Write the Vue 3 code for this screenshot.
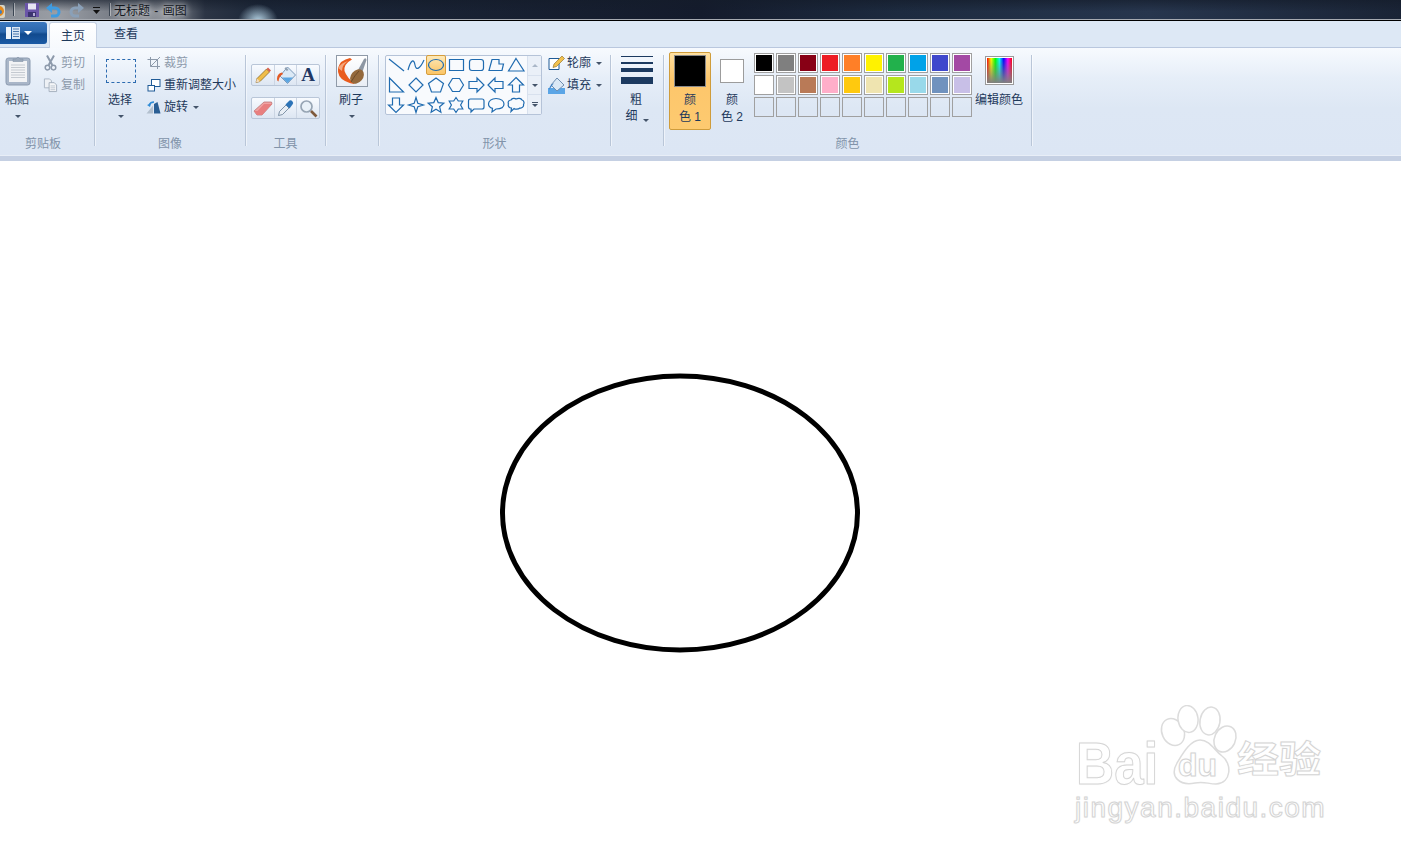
<script setup>
const row1 = ['#000000', '#7f7f7f', '#880015', '#ed1c24', '#ff7f27', '#fff200', '#22b14c', '#00a2e8', '#3f48cc', '#a349a4']
const row2 = ['#ffffff', '#c3c3c3', '#b97a57', '#ffaec9', '#ffc90e', '#efe4b0', '#b5e61d', '#99d9ea', '#7092be', '#c8bfe7']
const row3 = Array(10).fill('transparent')

// 形状ギャラリー: 20x20 のセルに描く
const shapes = [
  'M3 4 L18 16',
  'M2 15 C5 4 8 4 9 10 C10 16 14 14 18 5',
  'ELLIPSE',
  'M3.5 4.5 H17.5 V15.5 H3.5 Z',
  'M6 4.5 H15 Q17.5 4.5 17.5 7 V13 Q17.5 15.5 15 15.5 H6 Q3.5 15.5 3.5 13 V7 Q3.5 4.5 6 4.5 Z',
  'M3 15.5 L6 4.5 H13 L13 9 L17.5 9 L16 15.5 Z',
  'M10 3.5 L18 16 H2.5 Z',
  'M3.5 3 V17 H17.5 Z',
  'M10 3 L17 10 L10 17 L3 10 Z',
  'M10 3 L17.5 8.5 L14.5 17 H5.5 L2.5 8.5 Z',
  'M6.5 3.5 H13.5 L17.5 10 L13.5 16.5 H6.5 L2.5 10 Z',
  'M3 6.5 H11 V3 L18 10 L11 17 V13.5 H3 Z',
  'M17 6.5 H9 V3 L2 10 L9 17 V13.5 H17 Z',
  'M10 2.5 L17.5 10 H13.5 V17 H6.5 V10 H2.5 Z',
  'M6.5 3 H13.5 V10 H17.5 L10 17.5 L2.5 10 H6.5 Z',
  'M10 2.5 L11.8 8.2 L17.5 10 L11.8 11.8 L10 17.5 L8.2 11.8 L2.5 10 L8.2 8.2 Z',
  'M10 2.5 L12.2 7.6 L17.8 8.1 L13.6 11.7 L14.9 17.2 L10 14.3 L5.1 17.2 L6.4 11.7 L2.2 8.1 L7.8 7.6 Z',
  'M10 2.5 L12.3 6 L16.8 6 L14.6 10 L16.8 14 L12.3 14 L10 17.5 L7.7 14 L3.2 14 L5.4 10 L3.2 6 L7.7 6 Z',
  'M4.5 4 H16 Q18 4 18 6 V12 Q18 14 16 14 H8 L5 17 V14 H4.5 Q2.5 14 2.5 12 V6 Q2.5 4 4.5 4 Z',
  'M10 3.5 C15 3.5 18 6 18 9 C18 12 15 14 10 14 L6 17 L6.5 13.4 C4 12.6 2.5 11 2.5 9 C2.5 6 5.5 3.5 10 3.5 Z',
  'M5 5 C6 3 9 3 10 4 C12 3 15 3 16 5 C18 5.5 18.5 8 17.5 9.5 C18 11.5 16 13.5 14 13 C12 14.5 9 14.5 8 13.5 L5 16.5 L5.5 13 C3 13 1.5 10.5 2.5 9 C1.5 7 3 5 5 5 Z',
]
</script>

<template>
  <div class="paint">
    <div class="titlebar">
      <div class="qat">
        <svg class="app-ico" width="8" height="18" viewBox="0 0 8 18"><rect x="-8" y="4" width="13" height="13" rx="2" fill="#d8d4c4"/><circle cx="-1" cy="10" r="5" fill="#e58a1f"/><circle cx="0" cy="11" r="2" fill="#3c7fc4"/></svg>
        <span class="qat-sep first"></span>
        <svg width="16" height="16" viewBox="0 0 16 16"><path d="M1 1 H15 V15 H1 Z" fill="#6a55a8"/><rect x="4" y="1.5" width="8" height="6" fill="#e6e4f2"/><rect x="4" y="10" width="8" height="5" fill="#3c3470"/><rect x="9" y="11" width="2" height="3" fill="#b4aed6"/></svg>
        <svg class="undo" width="17" height="16" viewBox="0 0 17 16"><path d="M5 6 H10 A4 4 0 0 1 10 14 H6" fill="none" stroke="#3f9be0" stroke-width="3"/><path d="M1 6 L7 1 V11 Z" fill="#3f9be0"/></svg>
        <svg class="redo" width="17" height="16" viewBox="0 0 17 16"><path d="M12 6 H7 A4 4 0 0 0 7 14 H11" fill="none" stroke="#8aa0b8" stroke-width="3"/><path d="M16 6 L10 1 V11 Z" fill="#8aa0b8"/></svg>
        <svg class="drop" width="9" height="9" viewBox="0 0 9 9"><rect x="1" y="1" width="7" height="1" fill="#111"/><path d="M1 4 H8 L4.5 8 Z" fill="#111"/></svg>
        <span class="qat-sep"></span>
      </div>
      <span class="title">无标题 - 画图</span>
    </div>

    <div class="tabs">
      <button class="app-btn">
        <svg width="15" height="12" viewBox="0 0 15 12"><rect width="5" height="12" fill="#eef4fb"/><rect x="6" width="8" height="12" fill="#dbe7f5"/><path d="M7 2 H13 M7 4.5 H13 M7 7 H13 M7 9.5 H13" stroke="#4d78ad" stroke-width="1"/></svg>
        <i class="tri white"></i>
      </button>
      <div class="tab active">主页</div>
      <div class="tab">查看</div>
    </div>

    <div class="ribbon">
      <section class="group g-clip">
        <div class="body">
          <div class="big paste">
            <svg class="big-ico" width="26" height="30" viewBox="0 0 26 30"><rect x="1" y="2" width="24" height="27" rx="2.5" fill="#a9b6c8" stroke="#8c9bb0"/><rect x="4" y="5" width="18" height="21" fill="#f2f3f5"/><path d="M6 9 H20 M6 11.5 H20 M6 14 H20 M6 16.5 H20 M6 19 H20 M6 21.5 H20" stroke="#c4c9d0"/><path d="M8 5.5 V3 H11 Q13 -0.5 15 3 H18 V5.5 Z" fill="#9aa8ba" stroke="#8494a8" stroke-width=".6"/></svg>
            <span class="paste-text">粘贴</span>
            <i class="tri"></i>
          </div>
          <div class="small-col clip-col">
            <div class="small off">
              <svg width="14" height="16" viewBox="0 0 14 16"><path d="M3.5 0.5 L8.8 10 M10.5 0.5 L5.2 10" stroke="#8d9aab" stroke-width="2"/><circle cx="4" cy="12.6" r="2.3" fill="none" stroke="#8d9aab" stroke-width="1.5"/><circle cx="10" cy="12.6" r="2.3" fill="none" stroke="#8d9aab" stroke-width="1.5"/></svg>
              <span>剪切</span>
            </div>
            <div class="small off">
              <svg width="16" height="16" viewBox="0 0 16 16"><path d="M1.5 1.5 H7 L9 3.5 V11 H1.5 Z" fill="#eef1f5" stroke="#aab5c3"/><path d="M6.5 5.5 H12 L14.5 8 V15 H6.5 Z" fill="#f5f6f8" stroke="#a2aebd"/><path d="M8 9 H13 M8 11 H13 M8 13 H13" stroke="#bcc5d0"/></svg>
              <span>复制</span>
            </div>
          </div>
        </div>
        <div class="group-label clip-label">剪贴板</div>
      </section>
      <span class="sep"></span>

      <section class="group g-image">
        <div class="body">
          <div class="big select">
            <span class="marquee"></span>
            <span class="select-text">选择</span>
            <i class="tri"></i>
          </div>
          <div class="small-col image-col">
            <div class="small off">
              <svg width="14" height="14" viewBox="0 0 14 14"><path d="M3.5 1 V10.5 H13 M0.5 3.5 H10.5 V13 M3.5 10.5 L13 1" fill="none" stroke="#8d9aab"/></svg>
              <span>裁剪</span>
            </div>
            <div class="small">
              <svg width="14" height="14" viewBox="0 0 14 14"><rect x="4.5" y="1.5" width="8.5" height="7" fill="#fff" stroke="#1f5a96"/><rect x="1" y="7.5" width="6.5" height="5.5" fill="#fff" stroke="#1f5a96"/></svg>
              <span>重新调整大小</span>
            </div>
            <div class="small">
              <svg width="15" height="14" viewBox="0 0 15 14"><path d="M8 13.5 H14.5 L11.5 2 L8 4 Z" fill="#2a5e94"/><path d="M7 13.5 H0.5 L7 5.5 Z" fill="#b3c0ce"/><path d="M3 5 Q4.5 2 8 2" fill="none" stroke="#2e8bd6" stroke-width="1.5"/><path d="M1 5 L5 3.5 L4 7 Z" fill="#2e8bd6"/></svg>
              <span>旋转</span>
              <i class="tri inline"></i>
            </div>
          </div>
        </div>
        <div class="group-label">图像</div>
      </section>
      <span class="sep"></span>

      <section class="group g-tools">
        <div class="body tools">
          <div class="toolbox">
            <span class="tool"><svg width="18" height="18" viewBox="0 0 18 18"><path d="M2 16.5 L3 12.5 L12.5 3 L15.5 6 L6 15.5 Z" fill="#f0bd4a" stroke="#7d6020" stroke-width=".7"/><path d="M2 16.5 L3 12.5 L6 15.5 Z" fill="#f3dcc0"/><path d="M12.5 3 L14 1.5 L17 4.5 L15.5 6 Z" fill="#d9604e"/></svg></span>
            <span class="tool"><svg width="20" height="19" viewBox="0 0 20 19"><path d="M11.5 1 L19.5 9 L11.5 17.5 L4 10 Z" fill="#dbe9f5" stroke="#7b98b8"/><path d="M6 11.5 L11.5 17 L17 11.5 Z" fill="#5aa5e2"/><path d="M10 1 L12.5 4 L10.8 5 L8.5 2.5 Z" fill="#90a0b2"/><path d="M6 6.5 Q1 7.5 1 13 Q1 15 2.5 15.5 Q3 10 7 8 Z" fill="#e25a26"/></svg></span>
            <span class="tool letter">A</span>
          </div>
          <div class="toolbox">
            <span class="tool"><svg width="20" height="17" viewBox="0 0 20 17"><path d="M1 11 L11 2 H18.5 L19 4 L9 15 H4 Z" fill="#f0a3a3" stroke="#b46c6c" stroke-width=".7"/><path d="M1 11 L4 15 H9 L19 4 H11 L4.5 11 Z" fill="#e87f7f"/></svg></span>
            <span class="tool"><svg width="18" height="18" viewBox="0 0 18 18"><path d="M1.5 16.5 L2.5 12.5 L9 6 L12 9 L5.5 15.5 Z" fill="#e8eef5" stroke="#667c94" stroke-width=".8"/><path d="M8.5 5.5 L10 4 L12.5 1.5 Q14 0.5 15.5 2.5 Q17 4 15.5 5.5 L12.5 9.5 Z" fill="#2d74b8"/></svg></span>
            <span class="tool"><svg width="19" height="19" viewBox="0 0 19 19"><circle cx="7.5" cy="7.5" r="5.5" fill="#e9f1f8" stroke="#97a5b4" stroke-width="1.7"/><path d="M12 12 L17.5 17.5" stroke="#7f5a3c" stroke-width="2.6"/></svg></span>
          </div>
        </div>
        <div class="group-label tools-label">工具</div>
      </section>
      <span class="sep"></span>

      <section class="group g-brush">
        <div class="body">
          <div class="big brush">
            <span class="brush-box">
              <svg width="30" height="30" viewBox="0 0 30 30"><path d="M21 14 L27 3 Q29 1 29.5 4 L25 17 Z" fill="#8d97a3"/><path d="M13 2 Q3 4 1 12 Q0 21 8 25 Q14 28 18 28 Q10 22 7.5 15 Q6.5 8 15 3.5 Z" fill="#e95b1d"/><path d="M1 12 Q4 7 11 5 Q5 9 5 15 Z" fill="#f4a67c"/><ellipse cx="20" cy="20.5" rx="8" ry="6" fill="#94693c" transform="rotate(-50 20 20.5)"/><path d="M14 26 Q18 19 22 15" stroke="#6c4a28" fill="none" stroke-width="1"/></svg>
            </span>
            <span class="brush-text">刷子</span>
            <i class="tri"></i>
          </div>
        </div>
      </section>
      <span class="sep"></span>

      <section class="group g-shapes">
        <div class="body">
          <div class="gallery">
            <div class="shape-grid">
              <span v-for="(d, i) in shapes" :key="i" class="shape" :class="{ picked: d === 'ELLIPSE' }">
                <svg width="20" height="20" viewBox="0 0 20 20">
                  <ellipse v-if="d === 'ELLIPSE'" cx="10" cy="10" rx="7.5" ry="5.5" fill="none" stroke="#1f6bb0" stroke-width="1.2"/>
                  <path v-else :d="d" fill="none" stroke="#1f6bb0" stroke-width="1.2"/>
                </svg>
              </span>
            </div>
            <div class="scroller">
              <span class="scroll-btn"><i class="tri up pale"></i></span>
              <span class="scroll-btn"><i class="tri"></i></span>
              <span class="scroll-btn last"><b class="bar"></b><i class="tri"></i></span>
            </div>
          </div>
          <div class="small-col shape-col">
            <div class="small">
              <svg width="17" height="16" viewBox="0 0 17 16"><path d="M1 3.5 H11 V14.5 H1 Z" fill="#fff" stroke="#1f5a96"/><path d="M5 12.5 L6 9 L14 1 L16.5 3.5 L8.5 11.5 Z" fill="#f2c14e" stroke="#8a6a20" stroke-width=".6"/></svg>
              <span>轮廓</span>
              <i class="tri inline"></i>
            </div>
            <div class="small">
              <svg width="17" height="17" viewBox="0 0 17 17"><rect y="11" width="17" height="6" fill="#5aa5e6"/><path d="M9 1 L16 8 L9 14 L3 8 Z" fill="#dbe8f5" stroke="#6d8db0"/><path d="M3 8 Q1 10 1 13 L6 6 Z" fill="#3d7fc2"/></svg>
              <span>填充</span>
              <i class="tri inline"></i>
            </div>
          </div>
        </div>
        <div class="group-label">形状</div>
      </section>
      <span class="sep"></span>

      <section class="group g-size">
        <div class="body">
          <div class="big size">
            <div class="lines">
              <span class="l1"></span><span class="l2"></span><span class="l3"></span><span class="l4"></span>
            </div>
            <span class="size-1">粗</span>
            <span class="size-2">细<i class="tri inline"></i></span>
          </div>
        </div>
      </section>
      <span class="sep"></span>

      <section class="group g-colors">
        <div class="body">
          <div class="color-btn active">
            <span class="color-box black"></span>
            <span class="color-text">颜<br />色 1</span>
          </div>
          <div class="color-btn second">
            <span class="color-box white"></span>
            <span class="color-text">颜<br />色 2</span>
          </div>
          <div class="palette">
            <span v-for="(c, i) in row1" :key="'a' + i" class="cell"><i :style="{ background: c }"></i></span>
            <span v-for="(c, i) in row2" :key="'b' + i" class="cell"><i :style="{ background: c }"></i></span>
            <span v-for="(c, i) in row3" :key="'c' + i" class="cell"><i :style="{ background: c }"></i></span>
          </div>
          <div class="edit">
            <span class="rainbow"><i></i></span>
            <span class="edit-text">编辑颜色</span>
          </div>
        </div>
        <div class="group-label">颜色</div>
      </section>
      <span class="sep"></span>
    </div>

    <div class="ribbon-foot"></div>

    <div class="canvas">
      <svg class="drawing" width="370" height="290" viewBox="0 0 370 290">
        <ellipse cx="185" cy="145" rx="177.5" ry="137" fill="none" stroke="#000" stroke-width="5" />
      </svg>

      <div class="watermark">
        <svg class="paw" width="110" height="100" viewBox="0 0 110 100">
          <ellipse cx="19" cy="27" rx="11" ry="14" transform="rotate(-25 19 27)" />
          <ellipse cx="34" cy="14" rx="10" ry="13.5" transform="rotate(-8 34 14)" />
          <ellipse cx="56" cy="16" rx="10" ry="14" transform="rotate(10 56 16)" />
          <ellipse cx="71" cy="34" rx="10.5" ry="13.5" transform="rotate(25 71 34)" />
          <path d="M46 35 C56 35 60 45 68 51 C78 58 78 78 62 79 C54 79 50 76 41 78 C26 81 15 72 23 58 C28 50 36 35 46 35 Z" />
        </svg>
        <span class="wm-bai">Bai</span>
        <span class="wm-du">du</span>
        <span class="wm-cn">经验</span>
        <span class="wm-url">jingyan.baidu.com</span>
      </div>
    </div>
  </div>
</template>

<style scoped>
.paint {
  width: 1401px;
  height: 855px;
  overflow: hidden;
  position: relative;
  font-family: "Liberation Sans", "Noto Sans CJK SC", sans-serif;
  font-size: 12px;
  color: #1e395b;
  background: #fff;
}

.titlebar {
  height: 19px;
  display: flex;
  align-items: center;
  border-bottom: 1px solid #a5a9b0;
  background:
    radial-gradient(ellipse 20px 17px at 258px 21px, #b6d4e6 0%, rgba(182, 212, 230, 0) 100%),
    linear-gradient(rgba(20, 28, 42, .65), rgba(20, 28, 42, 0) 60%),
    linear-gradient(90deg, #8a8f97 0, #9a9ea5 60px, #7a7f88 110px, #8f939a 165px, #2c3545 205px, #1c2739 260px, #141b2c 700px, #1d2b40 900px, #27364e 1150px, #1a2436 1401px);
}

.qat {
  display: flex;
  align-items: center;
  height: 19px;
}

.qat-sep {
  width: 1px;
  height: 13px;
  background: #3b4552;
  margin: 0 4px 0 8px;
  box-shadow: 1px 0 0 rgba(255, 255, 255, .4);
}

.qat-sep.first {
  margin: 0 10px 0 5px;
}

.undo {
  margin-left: 5px;
}

.redo {
  margin-left: 6px;
}

.drop {
  margin-left: 7px;
  margin-top: 2px;
}

.title {
  font-size: 12px;
  color: #14181f;
  text-shadow: 0 0 6px #fff;
  white-space: nowrap;
  word-spacing: 1px;
}

.tabs {
  height: 26px;
  border-top: 1px solid #000;
  display: flex;
  align-items: flex-end;
  background: #dde8f5;
  position: relative;
}

.app-btn {
  width: 47px;
  height: 22px;
  margin: 0 2px 3px 0;
  padding: 0 0 0 6px;
  border: none;
  border-radius: 0 3px 3px 0;
  display: flex;
  align-items: center;
  gap: 3px;
  background: linear-gradient(#3b78bf 0, #2a66ac 45%, #114a8e 55%, #1b5aa5 100%);
}

.tab {
  width: 58px;
  height: 26px;
  line-height: 27px;
  box-sizing: border-box;
  text-align: center;
  font-size: 12px;
}

.tab.active {
  width: 48px;
  margin-bottom: -1px;
  height: 26px;
  background: linear-gradient(#fff, #f6f9fd);
  border: 1px solid #c4d0e2;
  border-bottom: none;
  border-radius: 3px 3px 0 0;
  position: relative;
  z-index: 1;
  color: #1e395b;
}

.ribbon {
  height: 107px;
  display: flex;
  border-top: 1px solid #b9c7de;
  background: linear-gradient(#f7fafe 0, #e6eef8 30px, #dde7f4 60px, #dce6f4 100%);
}

.group {
  display: flex;
  flex-direction: column;
  position: relative;
  flex: none;
}

.body {
  display: flex;
  flex: 1;
  min-height: 0;
}

.group-label {
  height: 14px;
  line-height: 14px;
  margin-bottom: 4px;
  text-align: center;
  color: #8193a9;
  font-size: 12px;
}

.clip-label {
  padding-right: 8px;
}

.sep {
  flex: none;
  width: 1px;
  height: 91px;
  margin-top: 7px;
  background: #b9c6d8;
  box-shadow: 1px 0 0 rgba(255, 255, 255, .5);
}

.tri {
  display: block;
  width: 0;
  height: 0;
  border-left: 3px solid transparent;
  border-right: 3px solid transparent;
  border-top: 3px solid #44546a;
}

.tri.white {
  border-left-width: 4px;
  border-right-width: 4px;
  border-top: 4px solid #fff;
}

.tri.up {
  border-top: none;
  border-bottom: 3px solid #44546a;
}

.tri.pale {
  border-bottom-color: #aab7c8;
}

.tri.inline {
  display: inline-block;
  margin-left: 5px;
  vertical-align: middle;
}

.big {
  display: flex;
  flex-direction: column;
  align-items: center;
  line-height: 16px;
}

.big .tri {
  margin-top: 7px;
}

.small-col {
  display: flex;
  flex-direction: column;
  gap: 6px;
}

.small {
  height: 16px;
  display: flex;
  align-items: center;
  line-height: 16px;
  white-space: nowrap;
}

.small.off {
  color: #8d9aab;
}

.small svg {
  flex: none;
  margin-right: 3px;
}

/* clipboard */
.g-clip {
  width: 94px;
}

.paste {
  width: 26px;
  margin: 8px 0 0 5px;
}

.paste .big-ico {
  margin-bottom: 6px;
}

.paste-text {
  white-space: nowrap;
  color: #3d5068;
  margin-right: 2px;
}

.clip-col {
  margin: 7px 0 0 12px;
}

.clip-col .small svg {
  margin-right: 3px;
  width: 15px;
}

/* image */
.g-image {
  width: 150px;
}

.select {
  margin: 11px 0 0 11px;
  width: 30px;
}

.marquee {
  width: 28px;
  height: 22px;
  border: 1px dashed #2c6bb0;
  margin-bottom: 9px;
  flex: none;
}

.select-text {
  white-space: nowrap;
  margin-right: 2px;
}

.image-col {
  margin: 7px 0 0 11px;
}

.image-col .small svg {
  margin-right: 3px;
}

.image-col .small:last-child svg {
  margin-left: -1px;
}

/* tools */
.g-tools {
  width: 79px;
}

.tools {
  flex-direction: column;
  padding: 16px 0 0 5px;
  gap: 11px;
  flex: none;
}

.toolbox {
  width: 69px;
  height: 22px;
  box-sizing: border-box;
  border: 1px solid #b9c6d8;
  border-radius: 2px;
  display: flex;
  background: linear-gradient(#f8fbff, #dde6f2);
}

.tool {
  flex: 1;
  display: flex;
  align-items: center;
  justify-content: center;
  border-left: 1px solid #cbd5e3;
}

.tool:first-child {
  border-left: none;
}

.tool.letter {
  font-family: "Liberation Serif", serif;
  font-weight: bold;
  font-size: 19px;
  color: #1f3864;
}

.tools-label {
  margin-top: auto;
}

/* brushes */
.g-brush {
  width: 52px;
}

.brush {
  width: 52px;
  margin-top: 7px;
}

.brush-box {
  width: 32px;
  height: 32px;
  border: 1px solid #8f9aa8;
  background: linear-gradient(#fff, #e9eef5);
  box-sizing: border-box;
  display: flex;
  align-items: center;
  justify-content: center;
  margin-bottom: 5px;
}

.brush-text {
  margin-right: 2px;
}

/* shapes */
.g-shapes {
  width: 231px;
}

.gallery {
  width: 157px;
  height: 60px;
  margin: 7px 0 0 6px;
  box-sizing: border-box;
  border: 1px solid #b5c3d8;
  border-radius: 2px;
  background: #f8fafd;
  display: flex;
}

.shape-grid {
  width: 141px;
  margin-top: -1px;
  display: grid;
  grid-template-columns: repeat(7, 20px);
  grid-auto-rows: 20px;
}

.shape {
  display: flex;
  align-items: center;
  justify-content: center;
  box-sizing: border-box;
}

.shape.picked {
  background: linear-gradient(#fde9b8, #fbc567);
  border: 1px solid #d69d3c;
  border-radius: 2px;
}

.shape svg {
  flex: none;
}

.scroller {
  flex: 1;
  display: flex;
  flex-direction: column;
  background: #eaf0f8;
  border-left: 1px solid #d8e1ee;
}

.scroll-btn {
  flex: 1;
  display: flex;
  flex-direction: column;
  align-items: center;
  justify-content: center;
  border-bottom: 1px solid #d8e1ee;
}

.scroll-btn.last {
  border-bottom: none;
}

.bar {
  width: 6px;
  height: 1px;
  background: #44546a;
  margin-bottom: 1px;
}

.shape-col {
  margin: 7px 0 0 6px;
}

.shape-col .small svg {
  margin-right: 2px;
}

/* size */
.g-size {
  width: 52px;
}

.size {
  width: 52px;
  margin-top: 8px;
}

.lines {
  width: 32px;
  height: 36px;
  flex: none;
}

.lines span {
  display: block;
  background: #1c3a60;
}

.l1 {
  height: 1px;
}

.l2 {
  height: 2px;
  margin-top: 5px;
}

.l3 {
  height: 4px;
  margin-top: 4px;
}

.l4 {
  height: 7px;
  margin-top: 5px;
}

.size-1 {
  margin-right: 2px;
}

.size-2 {
  white-space: nowrap;
}

/* colours */
.g-colors {
  width: 367px;
}

.color-btn {
  width: 42px;
  height: 78px;
  box-sizing: border-box;
  margin-top: 4px;
  display: flex;
  flex-direction: column;
  align-items: center;
  flex: none;
  border-radius: 2px;
  text-align: center;
}

.color-btn.active {
  margin-left: 5px;
  border: 1px solid #cf9c3b;
  background: linear-gradient(#ffe0a0 0, #fdc66b 35%, #fdca70 100%);
}

.color-box {
  box-sizing: border-box;
  display: block;
  flex: none;
}

.color-box.black {
  width: 32px;
  height: 32px;
  margin-top: 2px;
  background: #000;
  border: 1px solid #8b8b8b;
}

.color-box.white {
  width: 24px;
  height: 24px;
  margin-top: 7px;
  background: #fff;
  border: 1px solid #9c9c9c;
}

.color-text {
  display: block;
  line-height: 17px;
  margin-top: 5px;
  white-space: nowrap;
}

.color-btn.second .color-text {
  margin-top: 9px;
}

.palette {
  width: 218px;
  margin: 5px 0 0 1px;
  display: grid;
  grid-template-columns: repeat(10, 20px);
  grid-auto-rows: 20px;
  gap: 2px;
  align-content: start;
  flex: none;
}

.cell {
  box-sizing: border-box;
  border: 1px solid #a0a0a0;
  padding: 1px;
  background: #fff;
}

.palette .cell:nth-child(n + 21) {
  background: transparent;
}

.cell i {
  display: block;
  width: 100%;
  height: 100%;
}

.edit {
  width: 48px;
  margin: 8px 0 0 3px;
  display: flex;
  flex-direction: column;
  align-items: center;
  flex: none;
}

.rainbow {
  width: 29px;
  height: 29px;
  box-sizing: border-box;
  border: 1px solid #9a9a9a;
  padding: 1px;
  background: #fff;
  flex: none;
}

.rainbow i {
  display: block;
  width: 100%;
  height: 100%;
  background:
    linear-gradient(rgba(128, 128, 128, 0), #808080),
    linear-gradient(90deg, #f00, #ff0, #0f0, #0ff, #00f, #f0f, #f00);
}

.edit-text {
  line-height: 16px;
  margin-top: 7px;
  white-space: nowrap;
}

.ribbon-foot {
  height: 6px;
  border-top: 1px solid #e8eef7;
  box-sizing: border-box;
  background: #c5d0e3;
}

.canvas {
  position: relative;
  height: 694px;
  background: #fff;
}

/* キャンバス上の楕円 */
.drawing {
  position: absolute;
  left: 495px;
  top: 207px;
}

.watermark {
  position: absolute;
  left: 1060px;
  top: 534px;
  width: 280px;
  height: 140px;
  color: #fff;
}

.watermark span {
  position: absolute;
  line-height: 1;
  white-space: nowrap;
  -webkit-text-stroke: 1px #d4d4d4;
  text-shadow: 0 0 2px #e6e6e6;
}

.paw {
  position: absolute;
  left: 94px;
  top: 10px;
}

.paw ellipse,
.paw path {
  fill: #fff;
  stroke: #dcdcdc;
  stroke-width: 1.5;
}

.wm-bai {
  left: 16px;
  top: 39px;
  font-size: 60px;
  font-weight: bold;
  transform: scaleX(.88);
  transform-origin: left center;
}

.wm-du {
  left: 118px;
  top: 54px;
  font-size: 32px;
  font-weight: bold;
}

.wm-cn {
  left: 177px;
  top: 45px;
  font-size: 42px;
  font-weight: bold;
  transform: scaleY(.88);
}

.wm-url {
  left: 15px;
  top: 99px;
  font-size: 28px;
  letter-spacing: 1.5px;
}
</style>
